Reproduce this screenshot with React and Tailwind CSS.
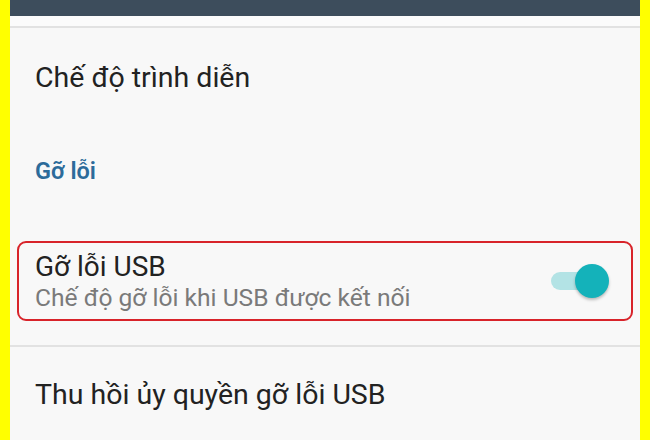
export default function App() {
  return (
    <div className="w-[650px] h-[440px] overflow-hidden bg-[#ffff00] flex px-[10px] font-['Roboto','Noto_Sans',sans-serif]">
      <div className="flex-1 flex flex-col bg-[#f8f8f8]">
        {/* Status / action bar edge */}
        <div className="h-[16px] bg-[#3d4d5c] shrink-0" />
        <div className="h-[12px] bg-[#fbfbfb] border-b-2 border-[#e2e2e2] shrink-0" />

        <div className="h-[98px] flex items-center pl-[25px] pt-[2px] shrink-0">
          <span className="text-[28.5px] text-[#222]">Chế độ trình diễn</span>
        </div>

        <div className="h-[92px] flex items-center pl-[25px] shrink-0">
          <span className="text-[23.5px] font-semibold text-[#2c6b9a]">Gỡ lỗi</span>
        </div>

        {/* Highlighted setting */}
        <div className="mt-[23px] mx-[7px] h-[80px] shrink-0 border-2 border-[#d8232a] rounded-[9px] flex items-center pl-[16px] pr-[22px]">
          <div className="flex-1 flex flex-col pt-[2px]">
            <span className="text-[28px] leading-[32px] text-[#222]">Gỡ lỗi USB</span>
            <span className="text-[24.6px] leading-[30px] text-[#7a7a7a]">Chế độ gỡ lỗi khi USB được kết nối</span>
          </div>
          <div className="relative w-[58px] h-[36px] flex items-center">
            <div className="w-[44px] h-[18px] rounded-full bg-[#b3e3e5]" />
            <div className="absolute right-0 top-[1px] w-[34px] h-[34px] rounded-full bg-[#14b2ba] shadow-[0_2px_3px_rgba(0,0,0,0.25)]" />
          </div>
        </div>

        <div className="h-[26px] shrink-0 border-b-2 border-[#e2e2e2]" />

        <div className="h-[96px] flex items-center pl-[25px] shrink-0">
          <span className="text-[28.5px] text-[#222]">Thu hồi ủy quyền gỡ lỗi USB</span>
        </div>
      </div>
    </div>
  );
}
